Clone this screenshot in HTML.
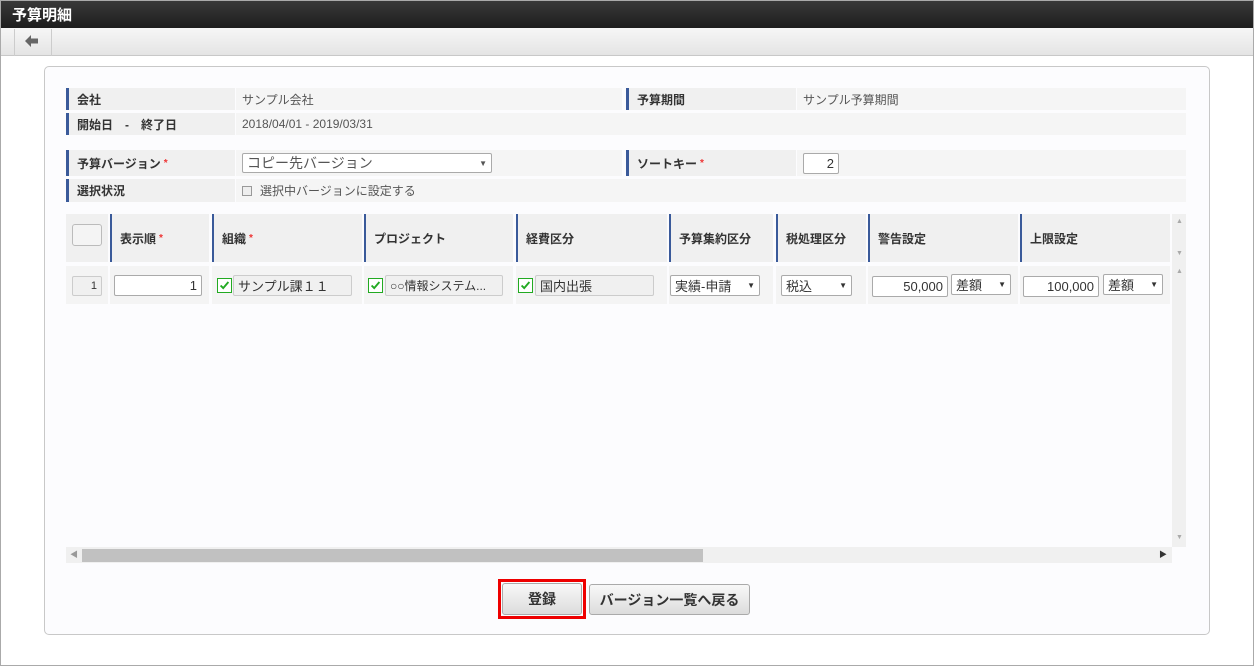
<!DOCTYPE html>
<html><head><meta charset="utf-8"><style>
*{box-sizing:border-box;margin:0;padding:0}
body{width:1254px;height:666px;position:relative;background:#fff;font-family:"Liberation Sans","Noto Sans CJK JP",sans-serif;font-size:12px;color:#333;overflow:hidden}
.a{position:absolute}
.frame{left:0;top:0;width:1254px;height:666px;border:1px solid #aaa;pointer-events:none;z-index:5}
.title{left:0;top:0;width:1254px;height:28px;background:linear-gradient(#3a3a3a,#1e1e1e);color:#fff;font-weight:bold;font-size:15px;padding:4px 12px}
.tb{left:0;top:28px;width:1254px;height:28px;background:linear-gradient(#f6f6f6,#e4e4e4);border-bottom:1px solid #c8c8c8}
.panel{left:44px;top:66px;width:1166px;height:569px;border:1px solid #c8c8c8;border-radius:5px;background:#fcfcfe}
.lb{background:#f0f0f0;border-left:3px solid #3a5a9a;font-weight:bold;font-size:12px;padding-left:8px;display:flex;align-items:center}
.vl{background:#f5f5f5;padding-left:6px;display:flex;align-items:center;color:#555}
.hd{background:#f0f0f0;top:214px;height:48px;font-weight:bold;font-size:12px;padding-left:8px;display:flex;align-items:center;border-left:2px solid #3a5a9a}
.cl{background:#f4f4f4;top:266px;height:38px}
.req{color:#e33;font-size:10px;margin-left:3px}
.inp{background:#fff;border:1px solid #aaa;border-radius:2px;height:21px;font-size:13px;display:flex;align-items:center;padding:0 4px}
.ro{background:#f0f0f0;border:1px solid #ccc;border-radius:2px;height:21px;font-size:13px;display:flex;align-items:center;padding:0 4px}
.sel{justify-content:space-between}
.sel:after{content:"▼";font-size:8px}
.ck{width:15px;height:15px;border:1px solid #2a2;background:#fff}
.btn{background:linear-gradient(#f8f8f8,#dcdcdc);border:1px solid #aaa;border-radius:3px;font-weight:bold;font-size:14px;display:flex;align-items:center;justify-content:center}
</style></head><body>
<div class="a title">予算明細</div>
<div class="a tb"></div>
<div class="a" style="left:14px;top:29px;width:38px;height:27px;border-left:1px solid #ccc;border-right:1px solid #ccc"></div>
<svg class="a" style="left:25px;top:35px" width="14" height="12" viewBox="0 0 14 12"><path d="M0 6 L6 0 L6 3.5 L13 3.5 L13 8.5 L6 8.5 L6 12 Z" fill="#666"/></svg>
<div class="a panel"></div>

<div class="a lb" style="left:66px;top:88px;width:169px;height:22px">会社</div>
<div class="a vl" style="left:236px;top:88px;width:386px;height:22px">サンプル会社</div>
<div class="a lb" style="left:626px;top:88px;width:170px;height:22px">予算期間</div>
<div class="a vl" style="left:797px;top:88px;width:389px;height:22px">サンプル予算期間</div>
<div class="a lb" style="left:66px;top:113px;width:169px;height:22px">開始日　-　終了日</div>
<div class="a vl" style="left:236px;top:113px;width:950px;height:22px">2018/04/01 - 2019/03/31</div>

<div class="a lb" style="left:66px;top:150px;width:169px;height:26px">予算バージョン<span class="req">*</span></div>
<div class="a vl" style="left:236px;top:150px;width:386px;height:26px"><div class="inp sel" style="width:250px;height:20px;font-size:14px">コピー先バージョン</div></div>
<div class="a lb" style="left:626px;top:150px;width:170px;height:26px">ソートキー<span class="req">*</span></div>
<div class="a vl" style="left:797px;top:150px;width:389px;height:26px"><div class="inp" style="width:36px;justify-content:flex-end;color:#333">2</div></div>
<div class="a lb" style="left:66px;top:179px;width:169px;height:23px">選択状況</div>
<div class="a vl" style="left:236px;top:179px;width:950px;height:23px"><span style="display:inline-block;width:10px;height:10px;border:1px solid #999;background:#eee;margin-right:8px"></span>選択中バージョンに設定する</div>

<div class="a" style="left:66px;top:214px;width:1106px;height:333px;background:#fcfcfe"></div>
<div class="a" style="left:66px;top:214px;width:42px;height:48px;background:#f0f0f0"></div>
<div class="a" style="left:72px;top:224px;width:30px;height:22px;border:1px solid #bbb;border-radius:3px;background:#f4f4f4"></div>
<div class="a hd" style="left:110px;width:99px">表示順<span class="req">*</span></div>
<div class="a hd" style="left:212px;width:150px">組織<span class="req">*</span></div>
<div class="a hd" style="left:364px;width:149px">プロジェクト</div>
<div class="a hd" style="left:516px;width:151px">経費区分</div>
<div class="a hd" style="left:669px;width:104px">予算集約区分</div>
<div class="a hd" style="left:776px;width:90px">税処理区分</div>
<div class="a hd" style="left:868px;width:150px">警告設定</div>
<div class="a hd" style="left:1020px;width:150px">上限設定</div>

<div class="a cl" style="left:66px;width:42px"></div>
<div class="a ro" style="left:72px;top:276px;width:30px;height:20px;font-size:11px;justify-content:flex-end">1</div>
<div class="a cl" style="left:110px;width:99px"></div>
<div class="a inp" style="left:114px;top:275px;width:88px;justify-content:flex-end">1</div>
<div class="a cl" style="left:212px;width:150px"></div>
<svg class="a ck" style="left:217px;top:278px" viewBox="0 0 15 15"><path d="M3 7.5 L6 10.5 L12 3.5" stroke="#2a2" stroke-width="2.2" fill="none"/></svg>
<div class="a ro" style="left:233px;top:275px;width:119px">サンプル課１１</div>
<div class="a cl" style="left:364px;width:149px"></div>
<svg class="a ck" style="left:368px;top:278px" viewBox="0 0 15 15"><path d="M3 7.5 L6 10.5 L12 3.5" stroke="#2a2" stroke-width="2.2" fill="none"/></svg>
<div class="a ro" style="left:385px;top:275px;width:118px;font-size:12px">○○情報システム...</div>
<div class="a cl" style="left:516px;width:151px"></div>
<svg class="a ck" style="left:518px;top:278px" viewBox="0 0 15 15"><path d="M3 7.5 L6 10.5 L12 3.5" stroke="#2a2" stroke-width="2.2" fill="none"/></svg>
<div class="a ro" style="left:535px;top:275px;width:119px">国内出張</div>
<div class="a cl" style="left:669px;width:104px"></div>
<div class="a inp sel" style="left:670px;top:275px;width:90px">実績-申請</div>
<div class="a cl" style="left:776px;width:90px"></div>
<div class="a inp sel" style="left:781px;top:275px;width:71px">税込</div>
<div class="a cl" style="left:868px;width:150px"></div>
<div class="a inp" style="left:872px;top:276px;width:76px;justify-content:flex-end">50,000</div>
<div class="a inp sel" style="left:951px;top:274px;width:60px">差額</div>
<div class="a cl" style="left:1020px;width:150px"></div>
<div class="a inp" style="left:1023px;top:276px;width:76px;justify-content:flex-end">100,000</div>
<div class="a inp sel" style="left:1103px;top:274px;width:60px">差額</div>

<div class="a" style="left:1172px;top:214px;width:14px;height:333px;background:#f0f0f0"></div>
<div class="a" style="left:1176px;top:218px;font-size:7px;color:#aaa">▲</div>
<div class="a" style="left:1176px;top:250px;font-size:7px;color:#aaa">▼</div>
<div class="a" style="left:1176px;top:268px;font-size:7px;color:#aaa">▲</div>
<div class="a" style="left:1176px;top:534px;font-size:7px;color:#aaa">▼</div>
<div class="a" style="left:66px;top:547px;width:1106px;height:16px;background:#f0f0f0"></div>
<div class="a" style="left:82px;top:549px;width:621px;height:13px;background:#c1c1c1"></div>
<div class="a" style="left:70px;top:549px;font-size:8px;color:#999">◀</div>
<div class="a" style="left:1159px;top:549px;font-size:8px;color:#333">▶</div>

<div class="a" style="left:498px;top:579px;width:88px;height:40px;border:3px solid #e00"></div>
<div class="a btn" style="left:502px;top:583px;width:80px;height:32px">登録</div>
<div class="a btn" style="left:589px;top:584px;width:161px;height:31px">バージョン一覧へ戻る</div>
<div class="a frame"></div>
</body></html>
